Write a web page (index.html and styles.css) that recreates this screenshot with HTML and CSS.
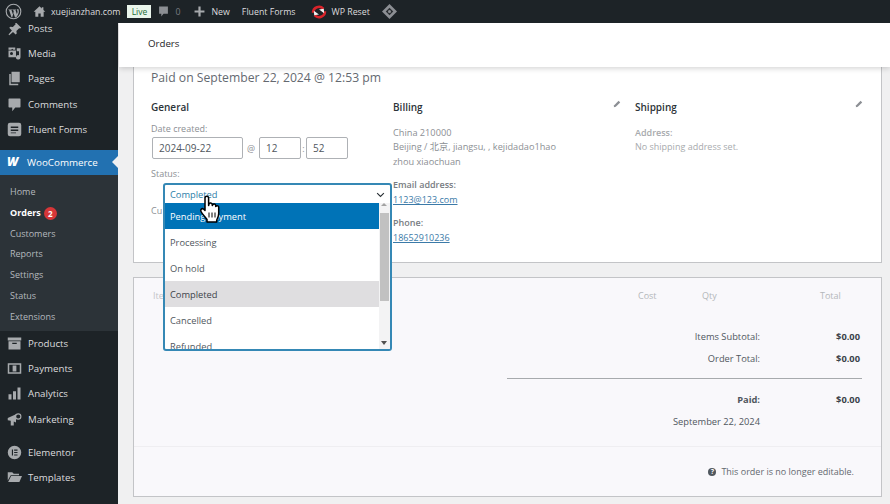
FILE: index.html
```html
<!DOCTYPE html>
<html lang="en">
<head>
<meta charset="utf-8">
<title>Orders</title>
<link rel="stylesheet" href="styles.css">
</head>
<body>
<header class="adminbar">
  <svg class="ab-wp" viewBox="0 0 20 20"><circle cx="10" cy="10" r="8.600" fill="none" stroke="#a7aaad" stroke-width="1.300"/><path fill="#a7aaad" d="M4 7.500h4.600v.6l-1 .1 1.700 5 1-3-.7-2-.7-.1v-.6h4.400v.6l-1 .1 1.700 5 .7-2.400c.3-1.200-.5-2-.6-2.800.2-.8 1.100-1 1.700-.7 1.100 2.500.6 5.300-2.200 9.200L11.800 17 10 11.800 8.500 17l-.9-.2-2.800-8.600-.8-.1z"/></svg>
  <svg class="ab-home" viewBox="0 0 20 20"><path fill="#a7aaad" d="M10 2 1 10.500h2.600V18h4.600v-5h3.600v5h4.600v-7.500H19L16 7.700V3.500h-2.500v1.900z"/></svg>
  <span class="ab-text site">xuejianzhan.com</span>
  <span class="live">Live</span>
  <svg class="ab-bubble" viewBox="0 0 20 20"><path fill="#8c8f94" d="M2 1h16v13h-8l-4 5v-5H2z"/></svg>
  <span class="ab-count">0</span>
  <svg class="ab-plus" viewBox="0 0 20 20"><path fill="#a7aaad" d="M8 1h4v7h7v4h-7v7H8v-7H1V8h7z"/></svg>
  <span class="ab-text new">New</span>
  <span class="ab-text forms">Fluent Forms</span>
  <svg class="ab-reset" viewBox="0 0 20 20"><path fill="none" stroke="#d8232a" stroke-width="3.200" d="M2.500 11a7.500 7.500 0 0 1 13-5"/><path fill="none" stroke="#d8232a" stroke-width="3.200" d="M17.500 9a7.500 7.500 0 0 1-13 5"/><path fill="#f2f2f2" d="M10 7l6-1 .5 5.500zM10 13l-6 1-.5-5.500z"/></svg>
  <span class="ab-text reset">WP Reset</span>
  <svg class="ab-diamond" viewBox="0 0 20 20"><path fill="#8c8f94" d="M10 0l10 10-10 10L0 10z"/><path fill="#2b2f33" d="M10 5l5 5-5 5-5-5z"/><circle cx="10" cy="10" r="2" fill="#8c8f94"/></svg>
</header>

<div class="shell">
  <nav class="sidebar">
    <ul class="menu top">
      <li><svg class="mi" viewBox="0 0 20 20"><path d="M11 1l8 8-1.500 1-1.300-.5-3.700 3.700.5 3.300-1.500 1.500-3.500-3.500L3 19l-1-1 4.500-5.500L3 9l1.500-1.500 3.300.5 3.700-3.700L11 3z"/></svg>Posts</li>
      <li><svg class="mi" viewBox="0 0 20 20"><path d="M2 2h9v3H8.500L7 3.500 5.500 5H2zM2 6h10v9H2zM13 3h5v12a3 3 0 1 1-2-2.800V7h-3z"/><circle cx="6" cy="10" r="2" fill="#1d2327"/></svg>Media</li>
      <li><svg class="mi" viewBox="0 0 20 20"><path d="M6 1h11v14H6z"/><path d="M3 4h2v13h10v2H3z"/></svg>Pages</li>
      <li><svg class="mi" viewBox="0 0 20 20"><path d="M3 2h14a1 1 0 0 1 1 1v10a1 1 0 0 1-1 1h-6l-4 5v-5H3a1 1 0 0 1-1-1V3a1 1 0 0 1 1-1z"/></svg>Comments</li>
      <li><svg class="mi" viewBox="0 0 20 20"><path fill-rule="evenodd" d="M4 1h12a3 3 0 0 1 3 3v12a3 3 0 0 1-3 3H4a3 3 0 0 1-3-3V4a3 3 0 0 1 3-3zm1 5v2h10V6zm0 4v2h10v-2zm0 4v1h7v-1z"/></svg>Fluent Forms</li>
    </ul>
    <div class="woo">
      <span class="woo-logo">W</span><span>WooCommerce</span>
    </div>
    <ul class="submenu">
      <li>Home</li>
      <li class="current">Orders <span class="badge">2</span></li>
      <li>Customers</li>
      <li>Reports</li>
      <li>Settings</li>
      <li>Status</li>
      <li>Extensions</li>
    </ul>
    <ul class="menu lower">
      <li><svg class="mi" viewBox="0 0 20 20"><path d="M1 2h18v4H1z"/><path fill-rule="evenodd" d="M2 7h16v11H2zm5 2v1.500h6V9z"/></svg>Products</li>
      <li><svg class="mi" viewBox="0 0 20 20"><path fill-rule="evenodd" d="M1 3h18v14H1zm2 2v10h14V5zm4.500 1h5v8h-5z"/></svg>Payments</li>
      <li><svg class="mi" viewBox="0 0 20 20"><path d="M2 11h4v7H2zM8 7h4v11H8zM14 2h4v16h-4z"/></svg>Analytics</li>
      <li><svg class="mi" viewBox="0 0 20 20"><path d="M1 8l11-5v11L9 12.800V18H5v-6.500L1 11z"/><circle cx="15" cy="6" r="3.500" fill="none" stroke="#a7aaad" stroke-width="1.500"/></svg>Marketing</li>
      <li class="gap"><svg class="mi" viewBox="0 0 20 20"><path fill-rule="evenodd" d="M10 1a9 9 0 1 1 0 18 9 9 0 0 1 0-18zM6.500 6v8H8V6zm3 0v1.500H14V6zm0 3.200v1.500H14V9.200zm0 3.300V14H14v-1.500z"/></svg>Elementor</li>
      <li><svg class="mi" viewBox="0 0 20 20"><path d="M1 3h6l2 2h7v2H5L1 14z"/><path d="M5.500 8H20l-3.500 8H1.500z"/></svg>Templates</li>
    </ul>
  </nav>

  <main class="main">
    <div class="pagehead">Orders</div>
    <section class="card order">
      <h2 class="paid-title">Paid on September 22, 2024 @ 12:53 pm</h2>
      <div class="columns">
        <div class="col">
          <h3>General</h3>
          <label class="lbl">Date created:</label>
          <div class="daterow">
            <span class="field date">2024-09-22</span><span class="sep at">@</span><span class="field small">12</span><span class="sep colon">:</span><span class="field small">52</span>
          </div>
          <label class="lbl status">Status:</label>
          <div class="lbl customer">Cu</div>
        </div>
        <div class="col">
          <h3>Billing <svg class="pencil" viewBox="0 0 20 20"><path d="M14 2l4 4L7 17l-5 1 1-5z"/></svg></h3>
          <p class="addr">China 210000<br>Beijing / 北京, jiangsu, , kejidadao1hao<br>zhou xiaochuan</p>
          <p class="addr-label">Email address:</p>
          <a class="lnk">1123@123.com</a>
          <p class="addr-label phone">Phone:</p>
          <a class="lnk">18652910236</a>
        </div>
        <div class="col">
          <h3>Shipping <svg class="pencil" viewBox="0 0 20 20"><path d="M14 2l4 4L7 17l-5 1 1-5z"/></svg></h3>
          <p class="ship-label">Address:</p>
          <p class="ship-none">No shipping address set.</p>
        </div>
      </div>
    </section>

    <section class="card items">
      <div class="items-head">
        <span class="h-item">Ite</span>
        <span class="h-cost">Cost</span>
        <span class="h-qty">Qty</span>
        <span class="h-total">Total</span>
      </div>
      <div class="totals">
        <div class="trow"><span class="t-l">Items Subtotal:</span><b class="t-v">$0.00</b></div>
        <div class="trow"><span class="t-l">Order Total:</span><b class="t-v">$0.00</b></div>
        <hr class="t-rule">
        <div class="trow"><b class="t-l">Paid:</b><b class="t-v">$0.00</b></div>
        <div class="trow"><span class="t-l">September 22, 2024</span><span class="t-v"></span></div>
      </div>
      <div class="items-foot"><span class="help">?</span>This order is no longer editable.</div>
    </section>
  </main>
</div>

<div class="dropdown">
  <div class="dd-head">Completed<svg class="chev" viewBox="0 0 12 8"><path d="M1.500 1.500 6 6l4.500-4.500" fill="none" stroke="#2c3338" stroke-width="1.500"/></svg></div>
  <div class="dd-body">
    <ul class="dd-list">
      <li class="hi">Pending payment</li>
      <li>Processing</li>
      <li>On hold</li>
      <li class="sel">Completed</li>
      <li>Cancelled</li>
      <li>Refunded</li>
    </ul>
    <div class="dd-scroll"><i class="up"></i><i class="thumb"></i><i class="down"></i></div>
  </div>
</div>

<svg class="cursor" viewBox="0 0 24 30"><path fill="#fff" stroke="#000" stroke-width="1.500" stroke-linejoin="round" d="M7 17V4.500a1.800 1.800 0 0 1 3.600 0V12l.4-1.500a1.700 1.700 0 0 1 3.200.5l.1 1 .4-.6a1.600 1.600 0 0 1 3 .6v1l.5-.4a1.500 1.500 0 0 1 2.500 1.100V20c0 3-1 4.500-2 6.500v2H9v-2.500C7.500 23.500 4.500 21 3 18c-1-2 1-3.500 2.500-2.500z"/><path stroke="#000" d="M11 19v5M14 19v5M17 19v5"/></svg>
</body>
</html>
```
FILE: styles.css
```css
* { box-sizing: border-box; }
html, body { margin: 0; padding: 0; height: 100%; overflow: hidden; }
body {
  width: 890px; height: 504px; background: #f0f0f1; position: relative;
  font-family: "Open Sans", "Noto Sans CJK SC", sans-serif; font-size: 9.5px; color: #50575e;
}
ul { list-style: none; margin: 0; padding: 0; }
p, h2, h3 { margin: 0; }

.adminbar {
  height: 23px; background: #1d2327; display: flex; align-items: center;
  position: relative; z-index: 3; color: #dcdcde; font-size: 8.800px;
}
.adminbar svg { flex: none; }
.ab-wp { width: 17px; height: 17px; margin-left: 5px; }
.ab-home { width: 13px; height: 13px; margin-left: 11px; }
.ab-text { white-space: nowrap; }
.site { margin-left: 5px; }
.live { margin-left: 7px; background: #eaf5ec; color: #1d6b35; font-size: 8.500px; width: 24px; height: 13px; line-height: 13px; text-align: center; }
.ab-bubble { width: 11px; height: 11px; margin-left: 7px; }
.ab-count { margin-left: 6px; color: #787c82; }
.ab-plus { width: 11px; height: 11px; margin-left: 14px; }
.new { margin-left: 6px; }
.forms { margin-left: 12px; }
.ab-reset { width: 16px; height: 16px; margin-left: 15px; }
.reset { margin-left: 5px; }
.ab-diamond { width: 15px; height: 15px; margin-left: 12px; }

.shell { display: flex; height: 481px; }
.sidebar {
  width: 118px; flex: none; background: #1d2327; color: #dcdcde; font-size: 9.700px;
  overflow: hidden;
}
.menu li { display: flex; align-items: center; height: 25.200px; padding-left: 7px; white-space: nowrap; }
.menu.top { margin-top: -7px; }
.mi { width: 15px; height: 15px; margin-right: 6px; fill: #a7aaad; flex: none; }
.woo {
  margin-top: 8px; height: 25px; background: #2271b1; color: #fff; display: flex; align-items: center;
  padding-left: 7px; position: relative; font-size: 9.800px;
}
.woo::after {
  content: ""; position: absolute; right: 0; top: 6.500px;
  border: 6px solid transparent; border-right-color: #f0f0f1; border-left: 0;
}
.woo-logo { width: 15px; margin-right: 5px; font-weight: 800; font-style: italic; font-size: 12px; line-height: 1; }
.submenu { background: #2c3338; height: 156px; padding-top: 7px; }
.submenu li { height: 20.800px; line-height: 20.800px; padding-left: 10px; font-size: 9px; color: #b4b9be; display: flex; align-items: center; }
.submenu .current { color: #fff; font-weight: 700; }
.badge {
  width: 13px; height: 13px; border-radius: 50%; background: #d63638; color: #fff;
  font-size: 8px; line-height: 13px; text-align: center; margin-left: 3px;
}
.menu.lower li.gap { margin-top: 8px; }

.main { flex: 1; min-width: 0; margin-left: 1px; display: flex; flex-direction: column; }
.pagehead {
  height: 44px; background: #fff; color: #1d2327; padding: 14px 0 0 29px; font-size: 9.700px; font-weight: 500;
  box-shadow: 0 1px 6px rgba(0, 0, 0, .2); position: relative; z-index: 2; flex: none;
}
.card { margin: 0 8px 0 14px; border: 1px solid #c3c4c7; flex: none; }
.order { background: #fff; height: 196px; border-top: 0; padding: 2px 0 0 17px; }
.paid-title { font-size: 12.200px; font-weight: 400; color: #646970; line-height: 17px; }
.columns { display: flex; margin-top: 14px; }
.col { width: 242px; flex: none; position: relative; }
.col h3 { font-size: 10px; font-weight: 600; color: #2c3338; line-height: 14px; }
.lbl { display: block; color: #8c8f94; font-size: 9px; }
.col .lbl:first-of-type { margin-top: 8px; line-height: 13px; }
.daterow { display: flex; align-items: center; margin: 2px 0 0 1px; }
.field { display: block; height: 22px; line-height: 20px; border: 1px solid #aeb1b5; border-radius: 2px; padding-left: 6px; color: #50575e; font-size: 10px; }
.date { width: 91px; }
.small { width: 42px; padding-left: 6px; }
.sep { color: #8c8f94; text-align: center; font-size: 9px; }
.at { width: 16px; }
.colon { width: 5px; }
.col .lbl.status { margin-top: 8px; line-height: 13px; }
.lbl.customer { position: absolute; left: 0; top: 104px; }
.addr { margin-top: 12px; line-height: 14.300px; color: #8c8f94; font-size: 9.200px; }
.addr-label { margin-top: 8px; font-size: 9px; font-weight: 600; color: #787c82; line-height: 15px; }
.addr-label.phone { margin-top: 8px; }
.lnk { display: block; color: #3b7aa8; text-decoration: underline; font-size: 9px; line-height: 15px; }
.pencil { position: absolute; right: 14px; top: 0; width: 8px; height: 8px; fill: #8c8f94; }
.ship-label { margin-top: 12px; font-size: 9px; font-weight: 600; color: #a7aaad; line-height: 14.300px; }
.ship-none { color: #a7aaad; font-size: 9px; line-height: 14.300px; }

.items { background: #f9f8fb; height: 220px; margin-top: 14px; position: relative; }
.items-head { height: 36px; color: #b4b7ba; font-size: 9px; display: flex; padding-top: 11px; }
.h-item { margin-left: 19px; width: 485px; color: #c3c4c7; }
.h-cost { width: 64px; }
.h-qty { width: 118px; }
.totals { width: 355px; margin-left: 373px; font-size: 9.300px; color: #50575e; padding-top: 11px; }
.trow { display: flex; height: 22px; align-items: center; }
.t-l { width: 253px; text-align: right; }
.t-v { width: 100px; text-align: right; color: #3c434a; }
b { font-weight: 700; }
.t-rule { border: 0; border-top: 1px solid #a7aaad; margin: 9px 0; width: 355px; }
.items-foot {
  position: absolute; left: 0; right: 0; top: 168px; bottom: 0; border-top: 1px solid #efeef1;
  display: flex; align-items: center; justify-content: flex-end; padding-right: 27px; color: #646970; font-size: 9px;
}
.help { width: 8px; height: 8px; border-radius: 50%; background: #50575e; color: #f9f8fb; font-size: 7px; line-height: 8px; text-align: center; margin-right: 5px; font-weight: 700; }

.dropdown {
  position: absolute; left: 163px; top: 183px; width: 229px; height: 168px; z-index: 2;
  border: 2px solid #3588b5; border-radius: 3px; background: #fff; overflow: hidden; font-size: 9.300px;
}
.dd-head { height: 18px; padding-left: 5px; color: #2c7ea8; line-height: 20px; position: relative; }
.chev { position: absolute; right: 5px; top: 7px; width: 9px; height: 6px; }
.dd-body { display: flex; height: 146px; }
.dd-list { width: 214px; flex: none; overflow: hidden; color: #50575e; }
.dd-list li { height: 26px; line-height: 28px; padding-left: 5px; white-space: nowrap; }
.dd-list .hi { background: #0073b7; color: #fff; font-weight: 500; }
.dd-list .sel { background: #dfdee0; color: #3c434a; }
.dd-scroll { flex: 1; background: #f3f3f4; position: relative; }
.thumb { position: absolute; left: 1px; right: 1px; top: 10px; height: 88px; background: #c1c1c1; }
.up, .down { position: absolute; left: 2px; border: 3px solid transparent; }
.up { top: 0; border-bottom: 3px solid #a3a3a3; border-top: 0; }
.down { bottom: 4px; border-top: 4px solid #505050; border-bottom: 0; }

.cursor { position: absolute; left: 198px; top: 193px; width: 24px; height: 31px; z-index: 4; }
```
